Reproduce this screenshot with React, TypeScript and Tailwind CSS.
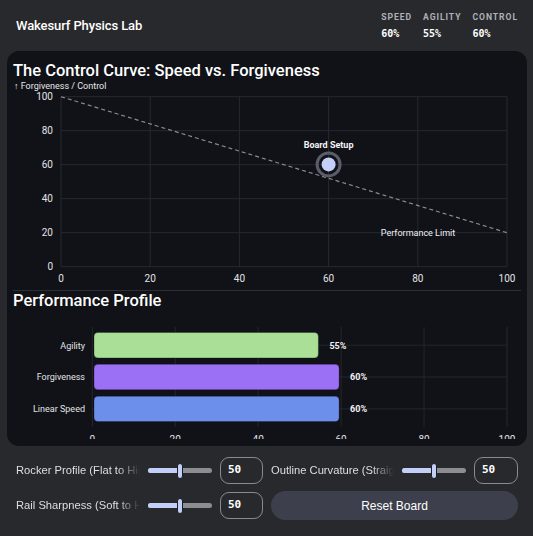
import React from "react";

function Slider() {
  return (
    <div className="relative w-[64px] h-[16px] flex items-center shrink-0">
      <div className="h-[5px] w-full rounded-full bg-[#8c8d91] flex">
        <div className="h-full w-1/2 rounded-full bg-[#c3cff8]" />
      </div>
      <div className="absolute left-[29px] top-0 w-[6px] h-[16px] rounded-full bg-[#c3cff8] border border-[#1c1c20]" />
    </div>
  );
}

function NumBox({ wide }: { wide?: boolean }) {
  return (
    <div
      className={
        (wide ? "w-[44px] " : "w-[43px] ") +
        "h-[27px] shrink-0 rounded-[9px] border border-[#8a8b8f] flex items-center pl-[7px] text-[11px] font-bold text-white font-['DejaVu_Sans_Mono',monospace]"
      }
    >
      50
    </div>
  );
}

function Control({ label, wide }: { label: string; wide?: boolean }) {
  return (
    <div className="flex items-center gap-2 min-w-0">
      <div className="flex-1 min-w-0 overflow-hidden whitespace-nowrap text-[11.2px] text-[#dedfe3] font-['Liberation_Sans',Arial,sans-serif] [mask-image:linear-gradient(to_right,black_82%,transparent)]">
        {label}
      </div>
      <Slider />
      <NumBox wide={wide} />
    </div>
  );
}

function ControlCurve() {
  const xs = [0, 20, 40, 60, 80, 100];
  const px = (v: number) => 61 + (v / 100) * 446;
  const py = (v: number) => 266.7 - (v / 100) * 170;
  return (
    <svg width={520} height={199} viewBox="7 91 520 199" className="block font-[Roboto,sans-serif]">
      {xs.map((v) => (
        <line key={"h" + v} x1={61} x2={507} y1={py(v)} y2={py(v)} stroke="#272930" strokeWidth={1} />
      ))}
      {xs.map((v) => (
        <line key={"v" + v} x1={px(v)} x2={px(v)} y1={96.7} y2={266.7} stroke="#272930" strokeWidth={1} />
      ))}
      {xs.map((v) => (
        <text key={"yl" + v} x={53} y={py(v) + 3.5} textAnchor="end" fontSize={10} fill="#e3e4e8">
          {v}
        </text>
      ))}
      {xs.map((v) => (
        <text key={"xl" + v} x={px(v)} y={281.5} textAnchor="middle" fontSize={10} fill="#e3e4e8">
          {v}
        </text>
      ))}
      <line x1={px(0)} y1={py(100)} x2={px(100)} y2={py(20)} stroke="#8a8c92" strokeWidth={1.2} strokeDasharray="4 3" />
      <text x={418} y={235.5} textAnchor="middle" fontSize={9} fill="#f0f1f4">
        Performance Limit
      </text>
      <circle cx={328.6} cy={164.4} r={11.5} fill="none" stroke="#5a5d69" strokeWidth={3} />
      <circle cx={328.6} cy={164.4} r={7} fill="#c3cff8" />
      <text x={328.6} y={148} textAnchor="middle" fontSize={9} fontWeight={700} fill="#f4f5f8">
        Board Setup
      </text>
    </svg>
  );
}

function PerfBars() {
  const px = (v: number) => 92.3 + (v / 100) * 414.7;
  const ticks = [0, 20, 40, 60, 80, 100];
  const bars = [
    { name: "Agility", v: 55, c: "#a9df97", y: 331.5 },
    { name: "Forgiveness", v: 60, c: "#9c70f5", y: 363.3 },
    { name: "Linear Speed", v: 60, c: "#6d8fec", y: 395.2 },
  ];
  return (
    <svg width={520} height={128} viewBox="7 310 520 128" className="block font-[Roboto,sans-serif]">
      {ticks.map((t) => (
        <line key={"g" + t} x1={px(t)} x2={px(t)} y1={326} y2={426} stroke="#24262c" strokeWidth={1} />
      ))}
      {bars.map((b) => (
        <line key={"hl" + b.name} x1={92.3} x2={507} y1={b.y + 12.7} y2={b.y + 12.7} stroke="#24262c" strokeWidth={1} />
      ))}
      {bars.map((b) => (
        <g key={b.name}>
          <rect x={94} y={b.y} width={px(b.v) - 96} height={25.4} rx={4} fill={b.c} stroke="#00000055" strokeWidth={0.8} />
          <text x={85} y={b.y + 16} textAnchor="end" fontSize={9} fill="#e3e4e8">
            {b.name}
          </text>
          <text x={px(b.v) + 9} y={b.y + 16} fontSize={9} fontWeight={700} fill="#f2f3f6">
            {b.v}%
          </text>
        </g>
      ))}
      {ticks.map((t) => (
        <text key={"t" + t} x={px(t)} y={441.5} textAnchor="middle" fontSize={10} fill="#e3e4e8">
          {t}
        </text>
      ))}
    </svg>
  );
}

export default function App() {
  const stats = [
    ["SPEED", "60%"],
    ["AGILITY", "55%"],
    ["CONTROL", "60%"],
  ];
  return (
    <div className="w-[533px] h-[536px] bg-[#28292c] text-white flex flex-col overflow-hidden font-[Roboto,sans-serif]">
      <header className="h-[51px] flex items-center justify-between pl-4 pr-[15px] shrink-0">
        <h1 className="text-[13px] font-medium tracking-[-0.1px] text-white">Wakesurf Physics Lab</h1>
        <div className="flex gap-[11px]">
          {stats.map(([l, v]) => (
            <div key={l} className="flex flex-col gap-[6px]">
              <span className="text-[8.6px] font-bold tracking-[0.11em] text-[#aeb0b8] leading-[10px]">{l}</span>
              <span className="text-[10px] font-bold text-white leading-[12px] font-['DejaVu_Sans_Mono',monospace]">
                {v}
              </span>
            </div>
          ))}
        </div>
      </header>

      <section className="mx-[7px] w-[520px] h-[395px] shrink-0 rounded-[12px] bg-[#111217] overflow-hidden flex flex-col pt-[10px]">
        <h2 className="px-[6px] text-[16.5px] leading-[20px] font-medium text-white">
          The Control Curve: Speed vs. Forgiveness
        </h2>
        <div className="px-[7px] text-[9px] leading-[10px] text-[#e6e7ea]">↑ Forgiveness / Control</div>
        <ControlCurve />
        <div className="mx-[6px] border-t border-[#2c2e35]" />
        <h2 className="px-[6px] text-[16.5px] leading-[20px] font-medium text-white">Performance Profile</h2>
        <PerfBars />
      </section>

      <div className="grid grid-cols-2 gap-x-2 gap-y-[7px] pl-4 pr-[15px] pt-[11px]">
        <Control label="Rocker Profile (Flat to High)" />
        <Control label="Outline Curvature (Straight to Round)" wide />
        <Control label="Rail Sharpness (Soft to Hard)" />
        <button className="h-[29px] rounded-full bg-[#3d404c] text-[12px] text-white font-['Liberation_Sans',Arial,sans-serif]">
          Reset Board
        </button>
      </div>
    </div>
  );
}
